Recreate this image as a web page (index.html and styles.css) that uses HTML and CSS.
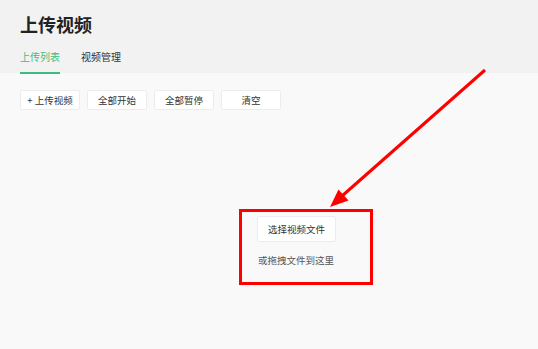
FILE: index.html
```html
<html>
  <head>
    <meta charset="utf-8">
    <link rel="stylesheet" href="styles.css">
  </head>
  <body>
    <div class="page-head">
      <h1 class="page-head__title">上传视频</h1>
      <div class="tabs">
        <div class="tab tab--active">上传列表</div>
        <div class="tab">视频管理</div>
      </div>
    </div>

    <div class="page-body">
      <div class="toolbar">
        <button class="btn">+ 上传视频</button>
        <button class="btn">全部开始</button>
        <button class="btn">全部暂停</button>
        <button class="btn">清空</button>
      </div>

      <div class="drop-zone">
        <button class="btn btn--pick">选择视频文件</button>
        <div class="drop-zone__hint">或拖拽文件到这里</div>
      </div>
    </div>

    <!-- annotation drawn over the screenshot -->
    <svg class="markup" width="538" height="349" viewBox="0 0 538 349">
      <line x1="485" y1="70" x2="342" y2="196" stroke="#f00" stroke-width="3" />
      <polygon points="330,207 348.5,200.5 338.5,189.5" fill="#f00" />
      <rect x="240.5" y="210.5" width="131" height="73" fill="none" stroke="#f00" stroke-width="3" />
    </svg>
  </body>
</html>
```

FILE: styles.css
```css
body {
  margin: 0;
  background: #f9f9f9;
  font-family: "Noto Sans CJK SC", "Liberation Sans", sans-serif;
  color: #333;
}

.page-head {
  background: #f2f2f2;
  padding: 11px 20px 0;
  height: 62px;
}
.page-head__title {
  margin: 0;
  font-size: 18px;
  line-height: 26px;
  font-weight: bold;
  color: #222;
}

.tabs {
  display: flex;
  gap: 21px;
  margin-top: 13px;
}
.tab {
  font-size: 10px;
  line-height: 14px;
  padding-bottom: 8px;
  color: #333;
}
.tab--active {
  color: #3dbd7d;
  border-bottom: 2px solid #3dbd7d;
}

.page-body {
  padding: 17px 20px 0;
}

.toolbar {
  display: flex;
  gap: 7px;
}

.btn {
  background: #fff;
  border: 1px solid #ececec;
  border-radius: 2px;
  font-family: inherit;
  font-size: 9.5px;
  color: #333;
  width: 60px;
  height: 20px;
  padding: 0;
}

.drop-zone {
  display: flex;
  flex-direction: column;
  align-items: flex-start;
  padding: 106px 0 0 237px;
}
.btn--pick {
  width: 79px;
  height: 26px;
  font-size: 9.5px;
}
.drop-zone__hint {
  margin-top: 11px;
  margin-left: 1px;
  font-size: 9.5px;
  color: #555;
}

.markup {
  position: absolute;
  left: 0;
  top: 0;
  pointer-events: none;
}
```
